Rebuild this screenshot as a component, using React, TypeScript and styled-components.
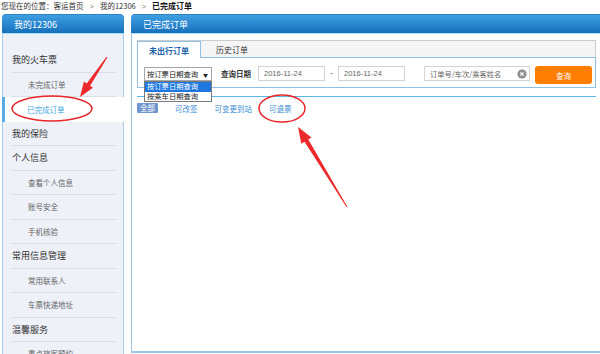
import React from 'react';
import styled, { createGlobalStyle } from 'styled-components';

interface MenuItem {
  label: string;
  level: 'head' | 'sub';
  active?: boolean;
}

const menu: MenuItem[] = [
  { label: '我的火车票', level: 'head' },
  { label: '未完成订单', level: 'sub' },
  { label: '已完成订单', level: 'sub', active: true },
  { label: '我的保险', level: 'head' },
  { label: '个人信息', level: 'head' },
  { label: '查看个人信息', level: 'sub' },
  { label: '账号安全', level: 'sub' },
  { label: '手机核验', level: 'sub' },
  { label: '常用信息管理', level: 'head' },
  { label: '常用联系人', level: 'sub' },
  { label: '车票快递地址', level: 'sub' },
  { label: '温馨服务', level: 'head' },
  { label: '重点旅客预约', level: 'sub' },
];

const filterLinks = ['可改签', '可变更到站', '可退票'];

const App: React.FC = () => {
  return (
    <>
      <GlobalStyle />
      <Page>
        <Breadcrumb>
          您现在的位置：<span>客运首页</span>
          <Sep>&gt;</Sep>
          <span>我的12306</span>
          <Sep>&gt;</Sep>
          <Current>已完成订单</Current>
        </Breadcrumb>

        <Main>
          <SidePanel>
            <PanelHeader>我的12306</PanelHeader>
            <SideBody>
              {menu.map((item) => (
                <MenuRow key={item.label} active={item.active}>
                  <MenuInner level={item.level} active={item.active}>
                    {item.label}
                  </MenuInner>
                </MenuRow>
              ))}
            </SideBody>
          </SidePanel>

          <ContentPanel>
            <PanelHeader>已完成订单</PanelHeader>
            <ContentBody>
              <TabBox>
                <TabBar>
                  <Tab active>未出行订单</Tab>
                  <Tab>历史订单</Tab>
                </TabBar>
                <FilterRow>
                  <SelectWrap>
                    <SelectBox>
                      <span>按订票日期查询</span>
                      <Caret>▼</Caret>
                    </SelectBox>
                    <DropList>
                      <DropOption selected>按订票日期查询</DropOption>
                      <DropOption>按乘车日期查询</DropOption>
                    </DropList>
                  </SelectWrap>
                  <FieldLabel>查询日期</FieldLabel>
                  <DateInput>2016-11-24</DateInput>
                  <Dash>-</Dash>
                  <DateInput>2016-11-24</DateInput>
                  <SearchInput>
                    <span>订单号/车次/乘客姓名</span>
                    <svg width="10" height="10" viewBox="0 0 10 10">
                      <circle cx="5" cy="5" r="4.6" fill="#8e8e8e" />
                      <path d="M3.3 3.3 L6.7 6.7 M6.7 3.3 L3.3 6.7" stroke="#fff" strokeWidth="1.2" />
                    </svg>
                  </SearchInput>
                  <SearchButton>查询</SearchButton>
                </FilterRow>
              </TabBox>
              <Divider />
              <LinkRow>
                <Badge>全部</Badge>
                {filterLinks.map((l) => (
                  <FilterLink key={l}>{l}</FilterLink>
                ))}
              </LinkRow>
            </ContentBody>
          </ContentPanel>
        </Main>

        <Annotations width="600" height="354" viewBox="0 0 600 354">
          <ellipse cx="52" cy="108.5" rx="40" ry="12.5" fill="none" stroke="#e8262a" strokeWidth="1.5" />
          <ellipse cx="282" cy="108.5" rx="23" ry="13.5" fill="none" stroke="#e8262a" strokeWidth="1.5" />
          <polygon
            points="107.5,57.3 90.1,85.7 92.9,87.7 80,97 83.9,81.5 86.7,83.5 106.5,56.7"
            fill="#ec2a2c"
          />
          <polygon
            points="347.4,206.7 308.3,139.5 311.5,137.5 298,127 301.3,143.7 304.5,141.7 346.6,207.3"
            fill="#ec2a2c"
          />
        </Annotations>
      </Page>
    </>
  );
};

export default App;

// Styled Components
const GlobalStyle = createGlobalStyle`
  html, body {
    margin: 0;
    padding: 0;
    background: #ffffff;
    overflow: hidden;
  }
  #root {
    width: 600px;
    height: 354px;
    overflow: hidden;
  }
`;

const Page = styled.div`
  position: relative;
  width: 600px;
  height: 354px;
  overflow: hidden;
  font-family: 'Noto Sans CJK SC', 'Liberation Sans', sans-serif;
  color: #333;
`;

const Breadcrumb = styled.div`
  height: 14px;
  line-height: 12px;
  padding-left: 1px;
  font-size: 7.5px;
  color: #333;
  white-space: nowrap;
`;

const Sep = styled.span`
  margin: 0 6px;
  color: #8d7b69;
  font-family: 'Liberation Sans', sans-serif;
`;

const Current = styled.span`
  font-size: 8px;
  font-weight: bold;
  color: #111;
`;

const Main = styled.div`
  display: flex;
  align-items: flex-start;
  gap: 7px;
  padding-left: 2px;
`;

const SidePanel = styled.div`
  width: 122px;
  flex-shrink: 0;
`;

const PanelHeader = styled.div`
  height: 19px;
  line-height: 19px;
  padding-left: 12px;
  border-radius: 4px 4px 0 0;
  background: linear-gradient(to bottom, #3f9fdf 0%, #2a88d0 50%, #1670bb 100%);
  border-top: 1px solid #2d83c8;
  border-bottom: 1px solid #a6dcf6;
  box-sizing: border-box;
  height: 20px;
  color: #ffffff;
  font-size: 9px;
`;

const SideBody = styled.div`
  height: 340px;
  padding-top: 14px;
  background: #eef1f8;
  border-left: 1px solid #a9cbe9;
  border-right: 1px solid #a9cbe9;
`;

const MenuRow = styled.div<{ active?: boolean }>`
  height: 24.5px;
  background: ${(p) => (p.active ? '#ffffff' : 'transparent')};
  margin-left: ${(p) => (p.active ? '-1px' : '0')};
  margin-right: ${(p) => (p.active ? '-1px' : '0')};
  border-left: ${(p) => (p.active ? '3px solid #58ade6' : 'none')};
`;

const MenuInner = styled.div<{ level: 'head' | 'sub'; active?: boolean }>`
  height: 100%;
  box-sizing: border-box;
  margin: ${(p) => (p.active ? '0 8px 0 5px' : '0 7px 0 8px')};
  display: flex;
  align-items: center;
  padding-left: ${(p) => (p.level === 'head' ? '1px' : '17px')};
  border-bottom: ${(p) => (p.active ? 'none' : '1px solid #dbe0e8')};
  font-size: ${(p) => (p.level === 'head' ? '9px' : '7.5px')};
  color: ${(p) => (p.active ? '#3ea8e2' : p.level === 'head' ? '#333' : '#666')};
`;

const ContentPanel = styled.div`
  width: 475px;
  flex-shrink: 0;
`;

const ContentBody = styled.div`
  height: 319px;
  box-sizing: border-box;
  padding: 6px 0 0 5px;
  background: #ffffff;
  border-left: 1px solid #9cc6e8;
  border-right: 1px solid #9cc6e8;
  border-bottom: 2px solid #9cc6e8;
`;

const TabBox = styled.div`
  width: 459px;
`;

const TabBar = styled.div`
  display: flex;
  align-items: flex-end;
  height: 17px;
  box-sizing: border-box;
  background: #f5f5f5;
  border-top: 1px solid #cccccc;
  border-right: 1px solid #cccccc;
`;

const Tab = styled.div<{ active?: boolean }>`
  height: ${(p) => (p.active ? '17px' : '16px')};
  margin-top: ${(p) => (p.active ? '-1px' : '0')};
  margin-bottom: ${(p) => (p.active ? '-1px' : '0')};
  box-sizing: border-box;
  padding: 0 ${(p) => (p.active ? '11px' : '15px')};
  display: flex;
  align-items: center;
  font-size: 8px;
  font-weight: ${(p) => (p.active ? 'bold' : 'normal')};
  color: ${(p) => (p.active ? '#1c63ad' : '#333')};
  background: ${(p) => (p.active ? '#ffffff' : 'transparent')};
  border: ${(p) => (p.active ? '1px solid #8ec1e6' : 'none')};
  border-bottom: none;
  position: relative;
  z-index: 1;
`;

const FilterRow = styled.div`
  height: 31px;
  box-sizing: border-box;
  border: 1px solid #8ec1e6;
  display: flex;
  align-items: flex-start;
  padding: 8px 0 0 6px;
`;

const SelectWrap = styled.div`
  position: relative;
  margin-top: 1px;
`;

const SelectBox = styled.div`
  width: 68px;
  height: 14px;
  box-sizing: border-box;
  border: 1px solid #a6a6a6;
  display: flex;
  align-items: center;
  justify-content: space-between;
  padding: 0 3px 0 2px;
  font-size: 7.3px;
  color: #222;
  background: #fff;
`;

const Caret = styled.span`
  font-size: 5px;
  color: #222;
`;

const DropList = styled.div`
  position: absolute;
  top: 100%;
  left: 0;
  width: 68px;
  box-sizing: border-box;
  border: 1px solid #7a7a7a;
  background: #ffffff;
  z-index: 5;
`;

const DropOption = styled.div<{ selected?: boolean }>`
  height: 9.5px;
  line-height: 9.5px;
  padding-left: 2px;
  font-size: 7.3px;
  color: ${(p) => (p.selected ? '#ffffff' : '#222')};
  background: ${(p) => (p.selected ? '#1e78e0' : '#ffffff')};
`;

const FieldLabel = styled.div`
  margin: 0 7px 0 9px;
  height: 15px;
  line-height: 15px;
  font-size: 7.5px;
  font-weight: bold;
  color: #333;
`;

const DateInput = styled.div`
  width: 67px;
  height: 15px;
  box-sizing: border-box;
  border: 1px solid #d4d4d4;
  padding-left: 5px;
  line-height: 13px;
  font-family: 'Liberation Sans', sans-serif;
  font-size: 7.5px;
  color: #666;
`;

const Dash = styled.div`
  width: 13px;
  text-align: center;
  height: 15px;
  line-height: 14px;
  font-family: 'Liberation Sans', sans-serif;
  font-size: 8px;
  color: #555;
`;

const SearchInput = styled.div`
  margin-left: 19px;
  width: 106px;
  height: 15px;
  box-sizing: border-box;
  border: 1px solid #d4d4d4;
  display: flex;
  align-items: center;
  justify-content: space-between;
  padding: 0 2px 0 5px;
  font-size: 7.3px;
  color: #666;
`;

const SearchButton = styled.div`
  margin-left: 5px;
  width: 57px;
  height: 18px;
  border-radius: 3px;
  background: #ff7d00;
  color: #ffffff;
  font-size: 7.5px;
  display: flex;
  align-items: center;
  justify-content: center;
`;

const Divider = styled.div`
  width: 459px;
  height: 1px;
  margin-top: 8px;
  background: #5ab9ea;
`;

const LinkRow = styled.div`
  display: flex;
  align-items: center;
  gap: 17px;
  margin-top: 6px;
  height: 10px;
`;

const Badge = styled.span`
  padding: 0 3px;
  height: 10px;
  line-height: 10px;
  border-radius: 1px;
  background: #7095cf;
  color: #ffffff;
  font-size: 7.5px;
`;

const FilterLink = styled.span`
  font-size: 7.5px;
  color: #3a8ed4;
`;

const Annotations = styled.svg`
  position: absolute;
  top: 0;
  left: 0;
  pointer-events: none;
  z-index: 10;
`;
